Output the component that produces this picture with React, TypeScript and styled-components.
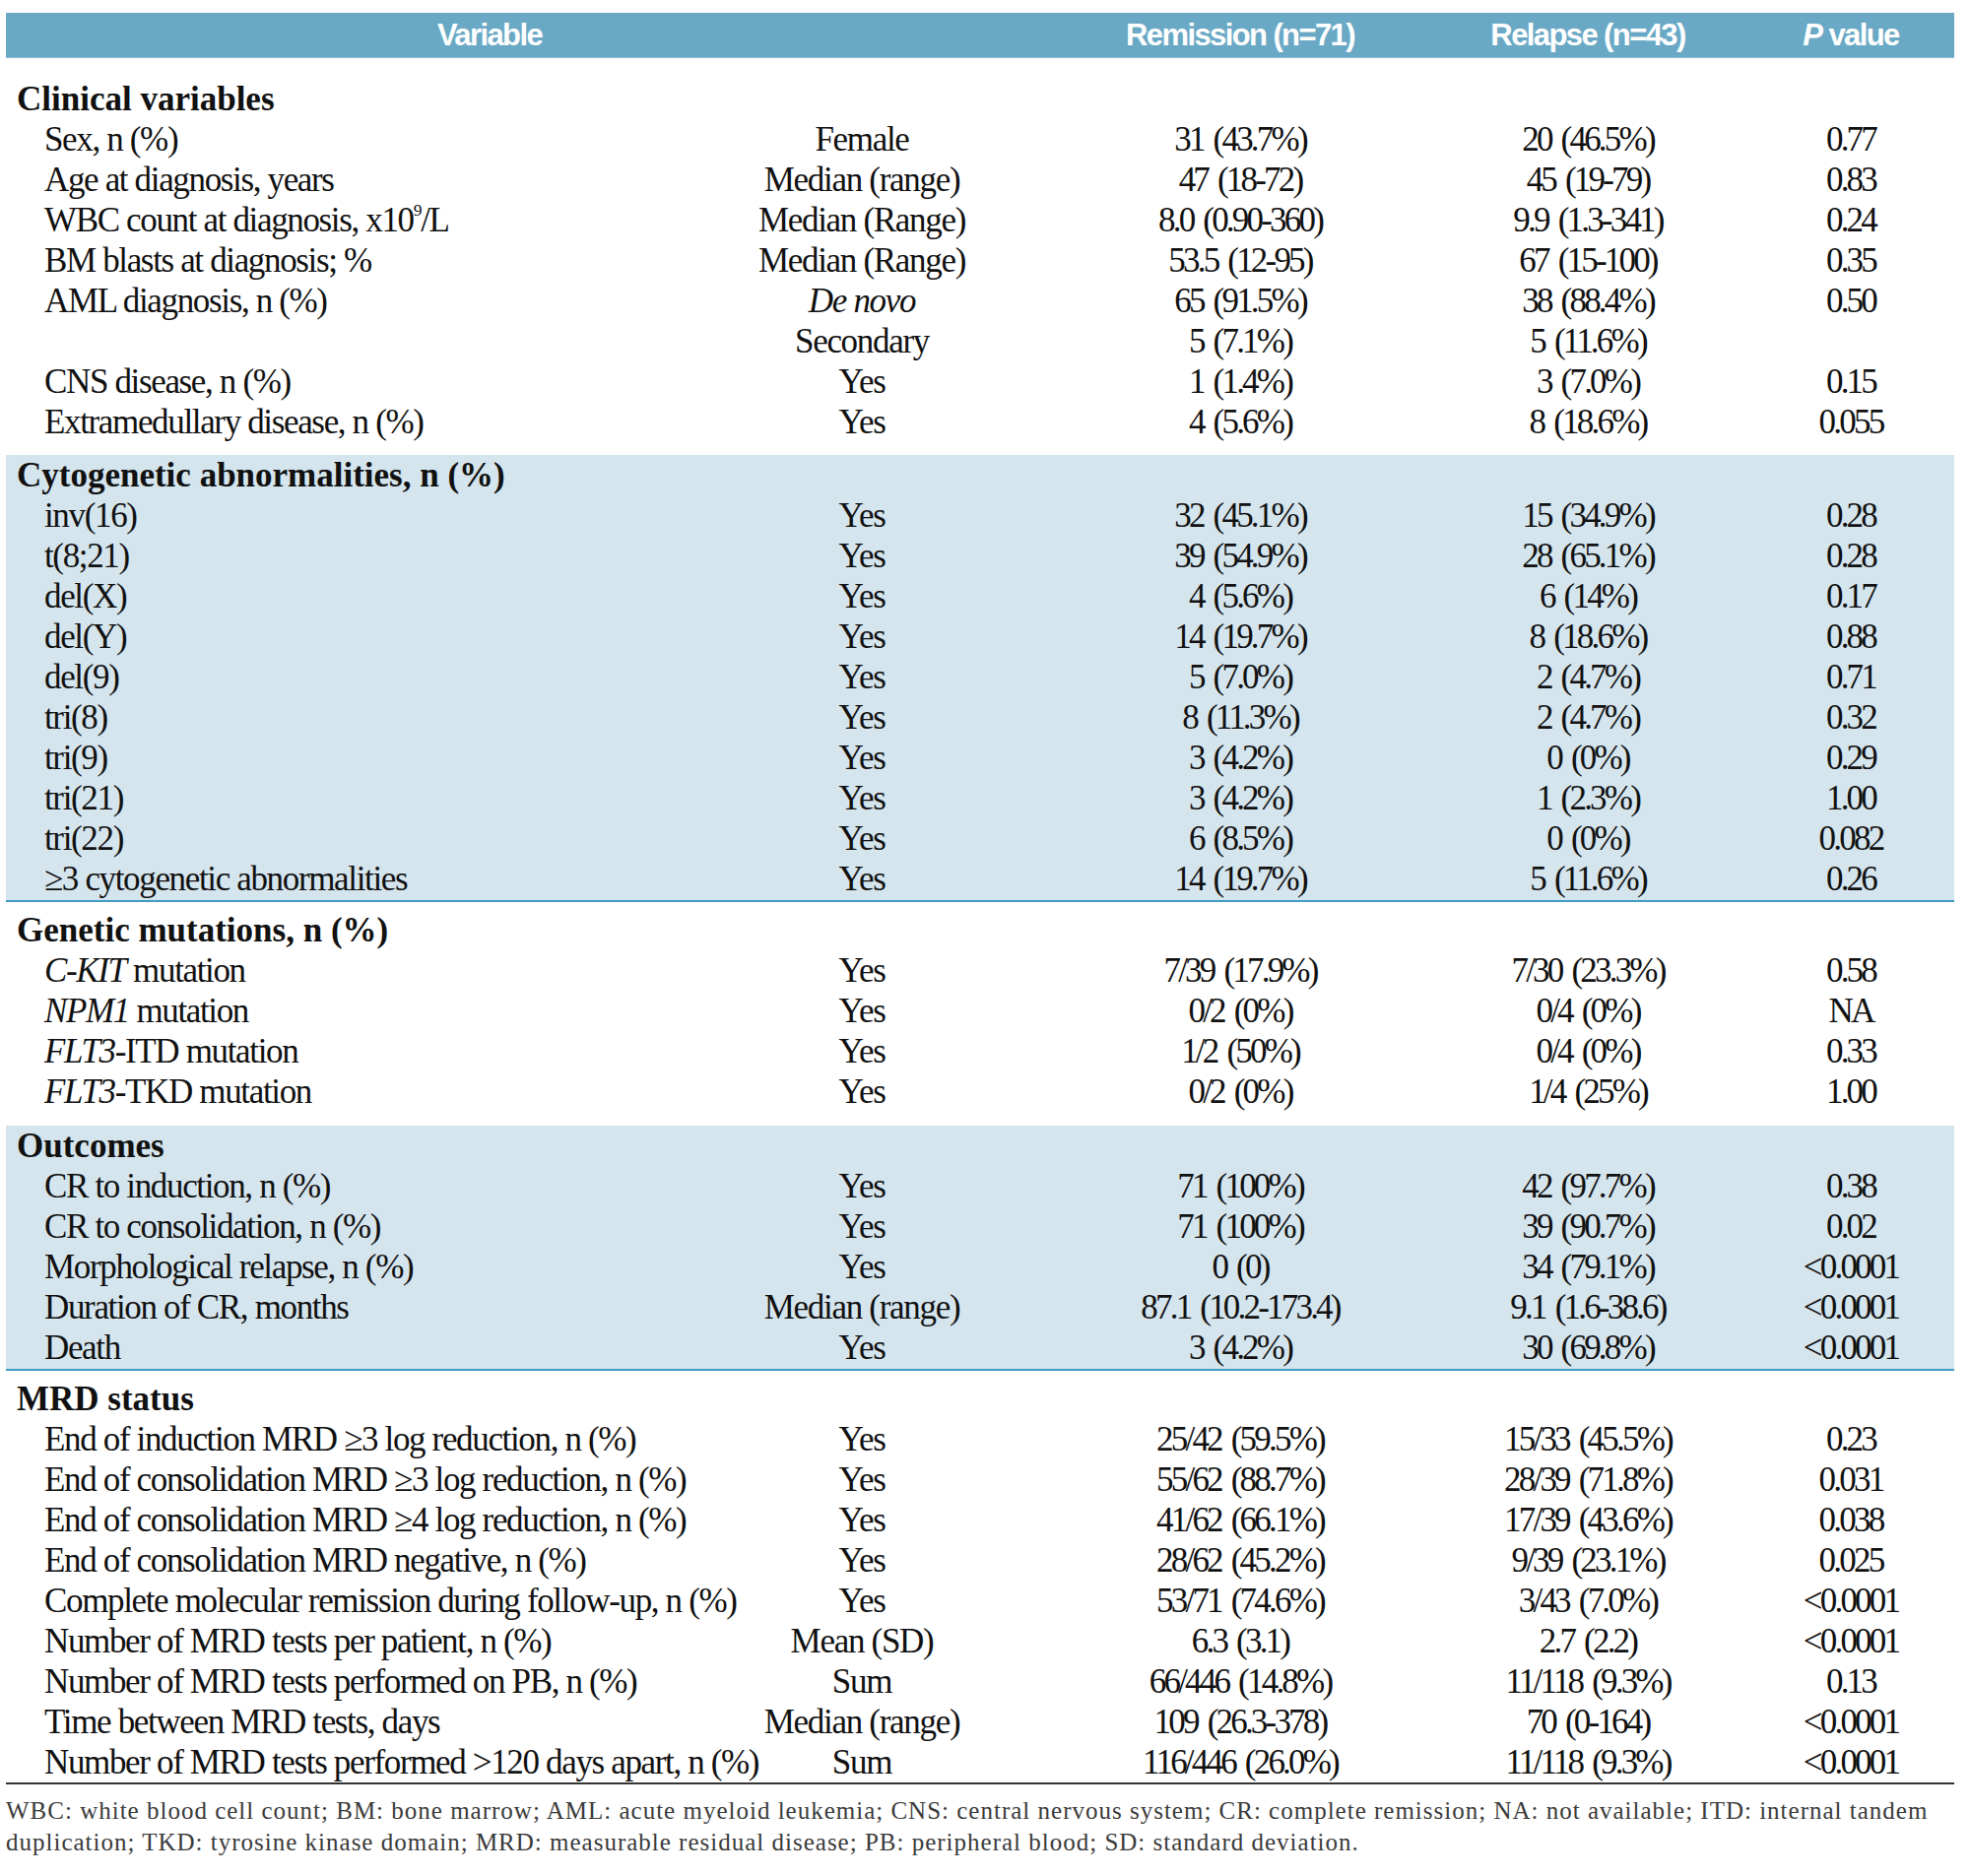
import React from "react";
import styled, { createGlobalStyle } from "styled-components";

const GlobalStyle = createGlobalStyle`
  html, body { margin: 0; padding: 0; background: #ffffff; }
  body { font-family: "Liberation Serif", "Times New Roman", serif; color: #111; }
`;

const COLS = "676px 386px 382px 324px 210px";

const Page = styled.div`
  width: 1978px;
  padding: 13px 16px 0 6px;
`;

const HeaderBar = styled.div`
  display: grid;
  grid-template-columns: ${COLS};
  height: 46px;
  background: #6aa9c5;
  border-bottom: 1px solid #8dbdd3;
  box-sizing: border-box;
`;

const HeadCell = styled.div<{ $span?: number; $padRight?: number }>`
  grid-column: span ${(p) => p.$span ?? 1};
  padding-right: ${(p) => p.$padRight ?? 0}px;
  text-align: center;
  line-height: 45px;
  font-family: "Liberation Sans Narrow", "Liberation Sans", Arial, sans-serif;
  font-stretch: condensed;
  font-weight: 700;
  font-size: 31px;
  letter-spacing: -1.6px;
  color: #ffffff;
  white-space: nowrap;
  em { font-style: italic; }
`;

const Section = styled.section<{ $shaded?: boolean; $top: number }>`
  margin-top: ${(p) => p.$top}px;
  background: ${(p) => (p.$shaded ? "#d5e5ee" : "transparent")};
  border-bottom: ${(p) => (p.$shaded ? "2px solid #3f9cc4" : "none")};
  padding-bottom: ${(p) => (p.$shaded ? 1 : 0)}px;
`;

const Row = styled.div`
  display: grid;
  grid-template-columns: ${COLS};
  height: 41px;
  line-height: 41px;
  font-size: 35px;
  letter-spacing: -1.35px;
  white-space: nowrap;
`;

const TitleRow = styled.div`
  height: 41px;
  line-height: 41px;
  font-size: 35px;
  font-weight: 700;
  padding-left: 11px;
  white-space: nowrap;
`;

const Label = styled.div`
  padding-left: 39px;
  overflow: visible;
  em { font-style: italic; }
  sup { font-size: 0.5em; line-height: 0; vertical-align: 0.9em; }
`;

const Cell = styled.div<{ $numeric?: boolean }>`
  text-align: center;
  letter-spacing: ${(p) => (p.$numeric ? "-2.8px" : "-1.3px")};
  word-spacing: ${(p) => (p.$numeric ? "4px" : "0")};
  em { font-style: italic; }
`;

const BottomRule = styled.div`
  height: 2px;
  background: #333333;
`;

const Footnote = styled.p`
  margin: 11px 0 0 0;
  font-size: 25px;
  line-height: 32px;
  letter-spacing: 1px;
  color: #3a3a3a;
  white-space: nowrap;
`;

type R = [React.ReactNode, React.ReactNode, string, string, string];

const sections: { title: string; shaded?: boolean; top: number; rows: R[] }[] = [
  {
    title: "Clinical variables",
    top: 21,
    rows: [
      ["Sex, n (%)", "Female", "31 (43.7%)", "20 (46.5%)", "0.77"],
      ["Age at diagnosis, years", "Median (range)", "47 (18-72)", "45 (19-79)", "0.83"],
      [
        <>WBC count at diagnosis, x10<sup>9</sup>/L</>,
        "Median (Range)",
        "8.0 (0.90-360)",
        "9.9 (1.3-341)",
        "0.24",
      ],
      ["BM blasts at diagnosis; %", "Median (Range)", "53.5 (12-95)", "67 (15-100)", "0.35"],
      ["AML diagnosis, n (%)", <em>De novo</em>, "65 (91.5%)", "38 (88.4%)", "0.50"],
      ["", "Secondary", "5 (7.1%)", "5 (11.6%)", ""],
      ["CNS disease, n (%)", "Yes", "1 (1.4%)", "3 (7.0%)", "0.15"],
      ["Extramedullary disease, n (%)", "Yes", "4 (5.6%)", "8 (18.6%)", "0.055"],
    ],
  },
  {
    title: "Cytogenetic abnormalities, n (%)",
    shaded: true,
    top: 13,
    rows: [
      ["inv(16)", "Yes", "32 (45.1%)", "15 (34.9%)", "0.28"],
      ["t(8;21)", "Yes", "39 (54.9%)", "28 (65.1%)", "0.28"],
      ["del(X)", "Yes", "4 (5.6%)", "6 (14%)", "0.17"],
      ["del(Y)", "Yes", "14 (19.7%)", "8 (18.6%)", "0.88"],
      ["del(9)", "Yes", "5 (7.0%)", "2 (4.7%)", "0.71"],
      ["tri(8)", "Yes", "8 (11.3%)", "2 (4.7%)", "0.32"],
      ["tri(9)", "Yes", "3 (4.2%)", "0 (0%)", "0.29"],
      ["tri(21)", "Yes", "3 (4.2%)", "1 (2.3%)", "1.00"],
      ["tri(22)", "Yes", "6 (8.5%)", "0 (0%)", "0.082"],
      ["≥3 cytogenetic abnormalities", "Yes", "14 (19.7%)", "5 (11.6%)", "0.26"],
    ],
  },
  {
    title: "Genetic mutations, n (%)",
    top: 8,
    rows: [
      [<><em>C-KIT</em> mutation</>, "Yes", "7/39 (17.9%)", "7/30 (23.3%)", "0.58"],
      [<><em>NPM1</em> mutation</>, "Yes", "0/2 (0%)", "0/4 (0%)", "NA"],
      [<><em>FLT3</em>-ITD mutation</>, "Yes", "1/2 (50%)", "0/4 (0%)", "0.33"],
      [<><em>FLT3</em>-TKD mutation</>, "Yes", "0/2 (0%)", "1/4 (25%)", "1.00"],
    ],
  },
  {
    title: "Outcomes",
    shaded: true,
    top: 14,
    rows: [
      ["CR to induction, n (%)", "Yes", "71 (100%)", "42 (97.7%)", "0.38"],
      ["CR to consolidation, n (%)", "Yes", "71 (100%)", "39 (90.7%)", "0.02"],
      ["Morphological relapse, n (%)", "Yes", "0 (0)", "34 (79.1%)", "<0.0001"],
      ["Duration of CR, months", "Median (range)", "87.1 (10.2-173.4)", "9.1 (1.6-38.6)", "<0.0001"],
      ["Death", "Yes", "3 (4.2%)", "30 (69.8%)", "<0.0001"],
    ],
  },
  {
    title: "MRD status",
    top: 8,
    rows: [
      ["End of induction MRD ≥3 log reduction, n (%)", "Yes", "25/42 (59.5%)", "15/33 (45.5%)", "0.23"],
      ["End of consolidation MRD ≥3 log reduction, n (%)", "Yes", "55/62 (88.7%)", "28/39 (71.8%)", "0.031"],
      ["End of consolidation MRD ≥4 log reduction, n (%)", "Yes", "41/62 (66.1%)", "17/39 (43.6%)", "0.038"],
      ["End of consolidation MRD negative, n (%)", "Yes", "28/62 (45.2%)", "9/39 (23.1%)", "0.025"],
      ["Complete molecular remission during follow-up, n (%)", "Yes", "53/71 (74.6%)", "3/43 (7.0%)", "<0.0001"],
      ["Number of MRD tests per patient, n (%)", "Mean (SD)", "6.3 (3.1)", "2.7 (2.2)", "<0.0001"],
      ["Number of MRD tests performed on PB, n (%)", "Sum", "66/446 (14.8%)", "11/118 (9.3%)", "0.13"],
      ["Time between MRD tests, days", "Median (range)", "109 (26.3-378)", "70 (0-164)", "<0.0001"],
      ["Number of MRD tests performed >120 days apart, n (%)", "Sum", "116/446 (26.0%)", "11/118 (9.3%)", "<0.0001"],
    ],
  },
];

export default function App() {
  return (
    <>
      <GlobalStyle />
      <Page>
        <HeaderBar>
          <HeadCell $span={2} $padRight={80}>Variable</HeadCell>
          <HeadCell>Remission (n=71)</HeadCell>
          <HeadCell>Relapse (n=43)</HeadCell>
          <HeadCell>
            <em>P</em> value
          </HeadCell>
        </HeaderBar>
        {sections.map((s) => (
          <Section key={s.title} $shaded={s.shaded} $top={s.top}>
            <TitleRow>{s.title}</TitleRow>
            {s.rows.map((r, i) => (
              <Row key={i}>
                <Label>{r[0]}</Label>
                <Cell>{r[1]}</Cell>
                <Cell $numeric>{r[2]}</Cell>
                <Cell $numeric>{r[3]}</Cell>
                <Cell $numeric>{r[4]}</Cell>
              </Row>
            ))}
          </Section>
        ))}
        <BottomRule />
        <Footnote>
          WBC: white blood cell count; BM: bone marrow; AML: acute myeloid leukemia; CNS: central nervous system; CR:
          complete remission; NA: not available; ITD: internal tandem
          <br />
          duplication; TKD: tyrosine kinase domain; MRD: measurable residual disease; PB: peripheral blood; SD: standard
          deviation.
        </Footnote>
      </Page>
    </>
  );
}
